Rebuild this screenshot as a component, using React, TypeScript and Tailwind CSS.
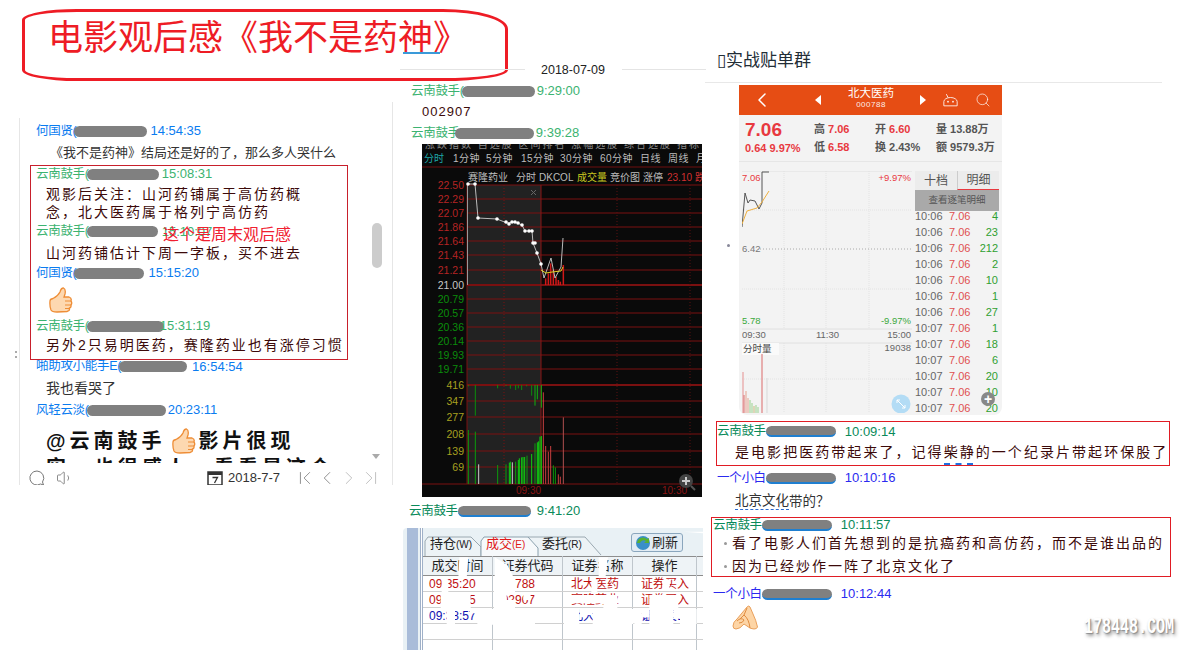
import React from 'react';
import { ChevronFirst, ChevronLast, ChevronLeft, ChevronRight, ChevronLeft as Back, Search, Volume1 } from 'lucide-react';

const sans = 'font-["Liberation_Sans","Noto_Sans_CJK_SC",sans-serif]';

const ThumbUp: React.FC<{ className?: string }> = ({ className }) => (
  <svg viewBox="0 0 26 26" className={className}>
    <path d="M3 14 Q3 12 6 11.500 Q11 9 13 5 Q14 1 16.500 1 Q19 2 18 7 L17 10 L22 10 Q25 11 24 14 Q25.500 16 24 18 Q24.500 20.500 22.500 21 Q23 24 20 24.500 L10 25 Q5 25 4 23 Q2.500 19 3 14Z" fill="#fdd8b0" stroke="#ee8d36" strokeWidth="1.300" />
    <path d="M18 14h6M18 18h6M18 21.500h4.500" stroke="#ee8d36" strokeWidth="1" fill="none" />
  </svg>
);

const PrayHands: React.FC<{ className?: string }> = ({ className }) => (
  <svg viewBox="0 0 26 25" className={className}>
    <path d="M1 21 Q1 17 5 14 L15 2 Q17 0 18 2 L21 9 Q24 15 25.500 22 Q25 24 22 24 Q18 24 15 21 L12 19 Q8 24 4 24 Q1 24 1 21Z" fill="#fdd5a6" stroke="#e9a05c" strokeWidth="1" />
    <path d="M15 3 L12 10 Q17 14 18 23M5 16 Q9 12 12 15 Q11 18 7 18M12 10 L8 14" stroke="#e08c40" strokeWidth="1" fill="none" />
  </svg>
);

// name line of one chat message, the grey pill is the blanked out QQ number
const Head: React.FC<{ name: string; pill: number; time: string; color: string; gap?: number; h: string; underline?: boolean; left?: number; pull?: number }> = ({ name, pill, time, color, gap = 3, h, underline, left = 0, pull = 0 }) => (
  <div className={`flex items-center whitespace-nowrap ${h} ${color}`} style={{ paddingLeft: left }}>
    <span className="text-[12.500px] tracking-[-0.300px]">{name}</span>
    <span className={`h-[11px] rounded-full bg-[#808080] ${underline ? 'border-b-2 border-[#1f7fd0]' : ''}`} style={{ width: pill, marginLeft: -pull }} />
    <span className="text-[13px]" style={{ marginLeft: gap }}>{time}</span>
  </div>
);

const Msg: React.FC<{ h: string; children: React.ReactNode; left?: string }> = ({ h, children, left = 'pl-[10px]' }) => (
  <div className={`flex items-center whitespace-nowrap text-[14px] tracking-[2px] text-[#3c0a0a] ${h} ${left}`}>{children}</div>
);

const LeftChat: React.FC = () => (
  <div className={`absolute left-[19px] top-[118px] h-[367px] w-[374px] overflow-hidden border-x border-[#e6e6e6] ${sans}`}>
    <div className="h-[345px] overflow-hidden pl-[16px]">
      <div className="h-[3px]" />
      <Head name="何国贤(" pill={73} pull={2} time="14:54:35" color="text-[#0a7cf0]" gap={3} h="h-[20px]" />
      <div className="flex h-[23px] items-center whitespace-nowrap pl-[14px] text-[13px] text-[#333]">《我不是药神》结局还是好的了，那么多人哭什么</div>
      <Head name="云南鼓手(" pill={72} pull={2} time="15:08:31" color="text-[#3cb371]" gap={3} h="h-[20px]" />
      <Msg h="h-[21px]">观影后关注：山河药铺属于高仿药概</Msg>
      <Msg h="h-[15px]">念，北大医药属于格列宁高仿药</Msg>
      <Head name="云南鼓手(" pill={71} pull={2} time="15:10:07" color="text-[#3cb371]" gap={4} h="h-[23px]" />
      <Msg h="h-[20px]">山河药铺估计下周一字板，买不进去</Msg>
      <Head name="何国贤(" pill={70} pull={2} time="15:15:20" color="text-[#0a7cf0]" gap={4} h="h-[20px]" />
      <div className="flex h-[33px] items-center pl-[11px]"><ThumbUp className="h-[26px] w-[26px]" /></div>
      <Head name="云南鼓手(" pill={77} pull={2} time="15:31:19" color="text-[#3cb371]" gap={-4} h="h-[20px]" />
      <Msg h="h-[19px]">另外2只易明医药，赛隆药业也有涨停习惯</Msg>
      <Head name="啪助攻小能手E(" pill={68} pull={2} time="16:54:54" color="text-[#0a7cf0]" gap={5} h="h-[23px]" />
      <div className="flex h-[21px] items-center whitespace-nowrap pl-[10px] text-[14px] text-[#333]">我也看哭了</div>
      <Head name="风轻云淡(" pill={79} pull={2} time="20:23:11" color="text-[#0a7cf0]" gap={2} h="h-[22px]" />
      <div className="flex h-[37px] items-center whitespace-nowrap pl-[10px] pt-[3px] text-[20px] font-bold tracking-[4px] text-[#111]">
        @云南鼓手<ThumbUp className="ml-[4px] mr-[3px] h-[26px] w-[26px]" />影片很现
      </div>
      <div className="whitespace-nowrap pl-[10px] text-[20px] font-bold leading-[20px] tracking-[4px] text-[#111]">实，也很感人，看看是这个</div>
    </div>
    <div className="absolute left-[352px] top-[105px] h-[45px] w-[10px] rounded-full bg-[#cccccc]" />
    <div className="absolute left-[352px] top-[336px] h-0 w-0 border-x-[4px] border-t-[5px] border-x-transparent border-t-[#aaa]" />
    <div className="flex h-[22px] items-center pl-[8px] pt-[8px] text-[#666]">
      <svg viewBox="0 0 18 18" className="h-[18px] w-[18px] shrink-0"><path d="M9 2a7 7 0 1 0 3.500 13l3 1-1-3A7 7 0 0 0 9 2Z" fill="none" stroke="#777" strokeWidth="1" /></svg>
      <Volume1 size={18} strokeWidth={1} className="ml-[10px] shrink-0" />
      <svg viewBox="0 0 16 16" className="ml-[133px] h-[16px] w-[16px] shrink-0"><rect x="1" y="2" width="14" height="13" fill="none" stroke="#333" strokeWidth="1.500" /><rect x="1" y="2" width="14" height="3" fill="#333" /><path d="M5.500 7.500h5L7.500 13" fill="none" stroke="#333" strokeWidth="1.300" /></svg>
      <span className="ml-[5px] whitespace-nowrap text-[13px] text-[#333]">2018-7-7</span>
      <div className="ml-[14px] flex shrink-0 items-center text-[#888]">
        <ChevronFirst size={22} strokeWidth={1} />
        <ChevronLeft size={22} strokeWidth={1} />
        <ChevronRight size={22} strokeWidth={1} className="text-[#bbb]" />
        <ChevronLast size={22} strokeWidth={1} className="text-[#bbb]" />
      </div>
    </div>
  </div>
);

const prices: [string, number, string][] = [
  ['22.50', 185, '#b52424'], ['22.29', 199, '#b52424'], ['22.07', 213, '#b52424'], ['21.86', 227, '#b52424'], ['21.64', 241, '#b52424'], ['21.43', 255, '#b52424'], ['21.21', 270, '#b52424'], ['21.00', 285, '#c8c8c8'],
  ['20.79', 299, '#0a8c0a'], ['20.57', 313, '#0a8c0a'], ['20.36', 327, '#0a8c0a'], ['20.14', 341, '#0a8c0a'], ['19.93', 355, '#0a8c0a'], ['19.71', 369, '#0a8c0a'],
];
const vols: [string, number][] = [['416', 385], ['347', 401], ['277', 417], ['208', 434], ['139', 451], ['69', 467]];
const tabs: [string, number][] = [['1分钟', 453], ['5分钟', 486], ['15分钟', 521], ['30分钟', 560], ['60分钟', 600], ['日线', 640], ['周线', 668], ['月', 696]];

// bars measured off the reference, x and top of bar
const hang = [[205, 319], [226, 407], [293, 325], [318, 318], [331, 326], [347, 330], [355, 325], [365, 330], [380, 319], [395, 347], [405, 377], [412, 358], [424, 383]];
const volBars: [number, number, string][] = [[205, 450, '#0c9c0c'], [226, 455, '#0c9c0c'], [236, 553, '#ccc'], [293, 555, '#0c9c0c'], [318, 553, '#0c9c0c'], [328, 548, '#0fd00f'], [331, 545, '#0fd00f'], [337, 547, '#ccc'], [347, 545, '#0c9c0c'], [355, 540, '#0fd00f'], [358, 535, '#0fd00f'], [365, 532, '#0fd00f'], [369, 531, '#0fd00f'], [374, 531, '#0fd00f'], [381, 527, '#0c9c0c'], [395, 522, '#0fd00f'], [405, 490, '#0c9c0c'], [412, 487, '#0fd00f'], [416, 484, '#0fd00f'], [420, 470, '#0fd00f'], [424, 468, '#0fd00f'], [430, 337, '#c84040'], [437, 498, '#c84040'], [445, 515, '#c84040'], [452, 498, '#c84040'], [460, 556, '#0c9c0c'], [466, 562, '#0c9c0c'], [475, 583, '#c84040'], [481, 590, '#c84040'], [490, 412, '#b05050']];
const miniBars = [[437, 655], [445, 640], [452, 610], [460, 630], [468, 650], [475, 660], [481, 665], [490, 615]];
const line = '468,184 475,184 478,218 497,219 507,223 515,222 522,225 525,231 532,231 533,243 537,253 541,264 544,278 551,258 555,278 561,267 563,238';
const dots = [[468, 184], [475, 184], [478, 218], [497, 219], [506, 222], [509, 224], [512, 222], [515, 222], [518, 223], [522, 225], [525, 231], [529, 231], [532, 231], [533, 243], [535, 243], [537, 253], [541, 264]];

const KChart: React.FC = () => (
  <svg viewBox="422 144 280 353" className="absolute left-[422px] top-[144px] h-[353px] w-[280px]" fontFamily="Liberation Sans, Noto Sans CJK SC, sans-serif" fontSize="10">
    <rect x="422" y="144" width="280" height="353" fill="#0a0a0a" />
    <text x="425" y="148" fill="#888" letterSpacing="2">涨跌指数 自选股 区间排名 涨幅选股 综合选股 指标</text>
    <text x="424" y="162" fill="#1ea8a8">分时</text>
    {tabs.map(([t, x]) => <text key={t} x={x} y="162" fill="#bdbdbd" letterSpacing="0.500">{t}</text>)}
    <line x1="422" x2="702" y1="167" y2="167" stroke="#6e0f0f" />
    <g fill="#bdbdbd">
      <text x="468" y="181">赛隆药业</text>
      <text x="516" y="181">分时</text>
      <text x="539" y="181">DKCOL</text>
      <text x="577" y="181" fill="#c8c820">成交量</text>
      <text x="610" y="181">竞价图</text>
      <text x="643" y="181">涨停</text>
      <text x="667" y="181" fill="#d03030">23.10</text>
      <text x="695" y="181" fill="#d03030">跌</text>
    </g>
    <rect x="467" y="185" width="74" height="299" fill="#222" />
    {prices.map(([t, y, c]) => (
      <g key={t}>
        <line x1="467" x2="702" y1={y} y2={y} stroke="#7a1010" strokeWidth={t === '21.00' ? 2 : 1} />
        <text x="464" y={y + 4} textAnchor="end" fill={c} fontSize="10.500">{t}</text>
      </g>
    ))}
    {vols.map(([t, y]) => (
      <g key={t}>
        <line x1="467" x2="702" y1={y} y2={y} stroke="#7a1010" strokeWidth={t === '416' ? 2 : 1} />
        <text x="464" y={y + 4} textAnchor="end" fill="#a8a020" fontSize="10.500">{t}</text>
      </g>
    ))}
    <line x1="422" x2="702" y1="484" y2="484" stroke="#7a1010" />
    <line x1="467" x2="467" y1="185" y2="484" stroke="#7a1010" />
    <line x1="504" x2="504" y1="185" y2="484" stroke="#7a1010" strokeDasharray="1 2" />
    <line x1="541" x2="541" y1="185" y2="484" stroke="#8a1414" />
    <line x1="617" x2="617" y1="185" y2="484" stroke="#5a1010" strokeDasharray="1 2" />
    <line x1="690" x2="690" y1="185" y2="484" stroke="#5a1010" strokeDasharray="1 2" />
    <path d="M531 190l5 5m0-5l-5 5" stroke="#666" />
    <line x1="467.500" x2="467.500" y1="184" y2="285" stroke="#999" />
    {hang.map(([x, y]) => <line key={x} x1={x / 3 + 400} x2={x / 3 + 400} y1="385" y2={y / 3 + 280} stroke={x > 400 ? '#0fb00f' : '#0c8c0c'} />)}
    {volBars.map(([x, y, c]) => <line key={x} x1={x / 3 + 400} x2={x / 3 + 400} y1="484" y2={y / 3 + 280} stroke={c} />)}
    {miniBars.map(([x, y]) => <line key={x} x1={x / 3 + 400} x2={x / 3 + 400} y1="285" y2={y / 3 + 60} stroke="#d01818" strokeWidth="1.500" />)}
    <polyline points={line} fill="none" stroke="#bbb" />
    <polyline points="541,270 546,273 552,272 561,271 563,267" fill="none" stroke="#e0d020" />
    {dots.map(([x, y], i) => <circle key={i} cx={x} cy={y} r="1.800" fill="#fff" />)}
    <text x="516" y="494" fill="#8a1414">09:30</text>
    <text x="662" y="494" fill="#8a1414">10:30</text>
    <circle cx="686" cy="481" r="7" fill="#444" />
    <path d="M686 477v8m-4-4h8" stroke="#ccc" strokeWidth="2" />
    <path d="M691 486l4 4" stroke="#555" strokeWidth="2" />
  </svg>
);

const orderRows = [
  { t: '09:35:20', code: '000788', name: '北大医药', op: '证券买入', c: 'text-[#c01010]' },
  { t: '09:36:15', code: '002907', name: '赛隆药业', op: '证券买入', c: 'text-[#c01010]' },
  { t: '09:38:57', code: '', name: '北大医药', op: '证券卖出', c: 'text-[#1010b0]' },
];
const headCls = 'w-[70px] shrink-0 border-r border-[#bfc6cc] text-center';
const cellCls = 'w-[70px] shrink-0 border-r border-[#bfc6cc] h-full';

const OrderTable: React.FC = () => (
  <div className={`absolute left-[403px] top-[528px] flex h-[122px] w-[300px] overflow-hidden rounded-tl-[4px] bg-[#e9f1f5] pl-[4px] ${sans}`}>
    <div className="w-[11px] bg-[#a9bcd9]" />
    <div className="ml-[2px] w-[3px] border-x border-[#9fb0c8] bg-white" />
    <div className="relative w-[280px] bg-white">
      <div className="relative flex h-[28px] items-end bg-[#e9f1f5] pb-[1px] pl-[6px] text-[13px] text-[#222]">
        <svg viewBox="423 528 280 28" className="absolute left-0 top-0 h-[28px] w-[280px]">
          <path d="M425 556V541L428 537H471L481 547V556" fill="#edf3f6" stroke="#9aa8b0" />
          <path d="M537 556L528 537H585L601 555" fill="#edf3f6" stroke="#9aa8b0" />
          <path d="M481 556V541L484 537H528L538 548V556" fill="#f6f9fb" stroke="#8aa0ad" />
        </svg>
        <div className="relative w-[56px] pb-[2px] pl-[1px]">持仓<span className="text-[10px]">(W)</span></div>
        <div className="relative w-[56px] pb-[2px] pl-[1px] text-[#e01818]">成交<span className="text-[10px]">(E)</span></div>
        <div className="relative w-[56px] pb-[2px] pl-[1px]">委托<span className="text-[10px]">(R)</span></div>
        <div className="absolute left-[208px] top-[5px] flex h-[19px] w-[52px] items-center gap-[1px] rounded-[3px] border border-[#8aa6bd] bg-[#e2ecf4] pl-[3px] text-[13px]">
          <svg viewBox="0 0 16 16" className="h-[16px] w-[16px]"><circle cx="8" cy="8" r="7" fill="#3a8fc8" /><path d="M2 8a6 6 0 0 1 10-4l2-1v5H9l2-2a4 4 0 0 0-6 2Z" fill="#58b030" /></svg>
          刷新
        </div>
      </div>
      <div className="flex h-[20px] items-center border-y border-[#8d8d8d] bg-[#eef3f6] text-[13px] text-[#222]">
        {['成交时间', '证券代码', '证券名称'].map((h) => <div key={h} className={headCls}>{h}</div>)}
        <div className="w-[64px] border-r border-[#bfc6cc] text-center">操作</div>
      </div>
      {orderRows.map((r) => (
        <div key={r.t} className={`flex h-[16px] items-center border-b border-[#d0d0d0] text-[12px] leading-[16px] ${r.c}`}>
          <div className={`${cellCls} pl-[6px]`}>{r.t}</div>
          <div className={`${cellCls} pl-[2px]`}>{r.code}</div>
          <div className={`${cellCls} pl-[8px]`}>{r.name}</div>
          <div className="h-full w-[64px] border-r border-[#bfc6cc] pl-[8px]">{r.op}</div>
        </div>
      ))}
      {[0, 1].map((i) => <div key={i} className="flex h-[16px] border-b border-[#d0d0d0]">{[0, 1, 2].map((j) => <div key={j} className={cellCls} />)}<div className="h-full w-[64px] border-r border-[#bfc6cc]" /></div>)}
    </div>
    {/* white scribbles laid over the table by whoever posted it */}
    <svg viewBox="0 0 930 450" className="absolute -left-[3px] -top-[28px] h-[150px] w-[310px]">
      <path d="M178 172H205L200 235H175Z" fill="#fff" />
      <path d="M125 238H145V282H125Z M122 285H212V325H122Z M140 327H165V372H140Z M210 327H268V372H232V340H210Z" fill="#fff" />
      <path d="M284 172 322 195 345 240V285H320V300H345V325H405V374H238V327H282V240H284Z" fill="#fff" />
      <path d="M370 285H392V300H370Z" fill="#fff" />
      <path d="M596 172H624L616 235H596Z" fill="#fff" />
      <path d="M574 238H592V282H574Z" fill="#fff" />
      <path d="M492 285H610V310H492Z M610 285H652V325H610Z M492 327H538V372H492Z M578 327H700V372H578Z" fill="#fff" />
      <path d="M540 327H578V345H540Z" fill="#fff" />
      <path d="M785 240H812L806 272H790Z" fill="#fff" />
      <path d="M748 285H835V325H748Z M703 327H725V372H703Z M748 327H820V372H748Z M840 327H890V372H840Z" fill="#fff" />
      <path d="M725 327H748V352H725Z M820 327H840V356H820Z" fill="#fff" />
      <path d="M850 95H930V450H912V100Z" fill="#fff" />
    </svg>
  </div>
);

const ticks = [
  ['10:06', '4'], ['10:06', '23'], ['10:06', '212'], ['10:06', '2'], ['10:06', '10'], ['10:06', '1'], ['10:06', '27'],
  ['10:07', '1'], ['10:07', '18'], ['10:07', '6'], ['10:07', '20'], ['10:07', '10'], ['10:07', '20'],
];

const Phone: React.FC = () => (
  <div className={`absolute left-[739px] top-[85px] h-[330px] w-[263px] overflow-hidden rounded-b-[8px] bg-[#f3f3f3] ${sans}`}>
    <div className="relative flex h-[30px] items-center bg-[#e64d14] text-white">
      <Back size={24} strokeWidth={1.500} className="ml-[11px]" />
      <div className="ml-[41px] h-0 w-0 border-y-[5px] border-r-[6px] border-y-transparent border-r-white" />
      <div className="-mt-[5px] ml-[27px] w-[46px] whitespace-nowrap text-center">
        <div className="text-[11.500px] leading-[14px]">北大医药</div>
        <div className="text-[8px] leading-[10px] tracking-[0.500px] opacity-90">000788</div>
      </div>
      <div className="ml-[26px] h-0 w-0 border-y-[5px] border-l-[6px] border-y-transparent border-l-white" />
      <svg viewBox="0 0 18 16" className="ml-[17px] h-[16px] w-[15px] shrink-0"><path d="M1 10a8 5 0 0 1 16 0v5H1ZM6 5 4 1" fill="none" stroke="#fff" strokeWidth="1" /><circle cx="6" cy="10" r="1" fill="#fff" /><circle cx="12" cy="10" r="1" fill="#fff" /></svg>
      <Search size={16} strokeWidth={1} className="ml-[17px] shrink-0" />
    </div>
    <div className="flex h-[47px] items-center border-b border-[#e6e6e6] pl-[6px] text-[11px] font-bold leading-[18px] text-[#555]">
      <div className="w-[69px] text-[#e8393f]">
        <div className="text-[19px] leading-[20px]">7.06</div>
        <div className="text-[11px] leading-[16px]">0.64 9.97%</div>
      </div>
      <div className="w-[61px]"><div>高 <span className="text-[#e8393f]">7.06</span></div><div>低 <span className="text-[#e8393f]">6.58</span></div></div>
      <div className="w-[61px]"><div>开 <span className="text-[#e8393f]">6.60</span></div><div>换 2.43%</div></div>
      <div><div>量 13.88万</div><div>额 9579.3万</div></div>
    </div>
    <div className="relative mt-[9px] flex pl-[3px]">
      <svg viewBox="742 173 170 242" className="h-[242px] w-[170px] shrink-0 bg-[#f3f3f3]" fontSize="9.500" fontFamily="Liberation Sans, Noto Sans CJK SC, sans-serif">
        <g stroke="#e3e3e3" strokeDasharray="1 1">
          <path d="M784 173V331M826 173V331M869 173V331M742 212H912M742 291H912M784 345V415M826 345V415M869 345V415M742 381H912" fill="none" />
        </g>
        <path d="M742 173H912M742 331H912M742 345H912" stroke="#e0e0e0" />
        <line x1="760" x2="912" y1="251" y2="251" stroke="#aaa" strokeDasharray="1 2" />
        <polyline points="742,229 745,195 748,205 750,202 755,203 759,211 762,205 762,174 769,174" fill="none" stroke="#555" />
        <polyline points="742,226 747,213 757,210 762,204 769,193" fill="none" stroke="#eeb040" />
        <text x="742" y="183" fill="#e8393f">7.06</text>
        <text x="911" y="183" fill="#e8393f" textAnchor="end">+9.97%</text>
        <text x="742" y="254" fill="#777">6.42</text>
        <text x="742" y="326" fill="#3aa83a">5.78</text>
        <text x="911" y="326" fill="#3aa83a" textAnchor="end">-9.97%</text>
        <text x="742" y="340" fill="#666">09:30</text>
        <text x="816" y="340" fill="#666">11:30</text>
        <text x="911" y="340" fill="#666" textAnchor="end">15:00</text>
        <rect x="742" y="345" width="37" height="12" fill="#fafafa" />
        <text x="743" y="354" fill="#444">分时量</text>
        <text x="911" y="353" fill="#666" textAnchor="end">19038</text>
        {[[743, 374, '#e8a0a0'], [744, 397, '#e08080'], [746, 393, '#e8b0a0'], [748, 400, '#e8b0a0'], [750, 402, '#a8d8a0'], [752, 405, '#a8d8a0'], [754, 408, '#d0c090'], [756, 407, '#a8d8a0'], [758, 409, '#a8d8a0'], [762, 356, '#e08080'], [767, 380, '#ddd']].map(([x, y, c]) => (
          <line key={x as number} x1={x} x2={x} y1="415" y2={y} stroke={c as string} strokeWidth="1.200" />
        ))}
        <circle cx="901" cy="406" r="9.500" fill="#b3dcf5" />
        <path d="M897 402l8 8m-8-8v3m0-3h3m5 8v-3m0 3h-3" stroke="#fff" fill="none" />
      </svg>
      <div className="relative ml-[3px] w-[84px] text-[11px]">
        <div className="flex h-[19px] items-center bg-[#ececec] text-[12px] text-[#555]">
          <div className="w-[42px] text-center">十档</div>
          <div className="h-[19px] w-[42px] border-b border-l border-b-[#e8393f] border-l-[#ccc] text-center leading-[19px]">明细</div>
        </div>
        <div className="relative z-10 flex h-[21px] items-center justify-center bg-[#a9a9a9] text-[9.500px] text-[#555]">查看逐笔明细</div>
        <div className="-mt-[3px]">
          {ticks.map(([t, n], i) => (
            <div key={i} className="flex h-[16px] items-center leading-none text-[#666]">
              <span className="w-[34px]">{t}</span>
              <span className="text-[#e05050]">7.06</span>
              <span className="flex-1 pr-[1px] text-right text-[#30a030]">{n}</span>
            </div>
          ))}
        </div>
        <div className="absolute left-[66px] top-[221px] flex h-[14px] w-[14px] items-center justify-center rounded-full bg-[#888] text-[14px] font-bold leading-none text-white">+</div>
      </div>
    </div>
  </div>
);

const RightChat: React.FC = () => (
  <div className={`absolute left-[711px] top-[421px] w-[460px] ${sans}`}>
    <div className="ml-[5px] h-[45px] w-[454px] border border-[#e01c24]">
      <Head name="云南鼓手" pill={70} time="10:09:14" color="text-[#0a8a5a]" gap={9} h="h-[19px]" underline />
      <Msg h="h-[23px]" left="pl-[18px]">
        <span className="tracking-[2.050px]">是电影把医药带起来了，记得<span className="relative">柴静<span className="absolute left-0 right-[3px] top-[19px] border-b-2 border-dashed border-[#1f6fe0]" /></span>的一个纪录片带起环保股了</span>
      </Msg>
    </div>
    <div className="ml-[6px] mt-[1px]">
      <Head name="一个小白" pill={70} time="10:10:16" color="text-[#2a2af0]" gap={9} h="h-[22px]" underline />
      <div className="flex h-[27px] items-center pl-[18px] pb-[2px]"><span className="border-b border-dashed border-[#2a6ad0] text-[13.500px] leading-[16px] text-[#333]">北京文化</span><span className="text-[13.500px] leading-[16px] text-[#333]">带的？</span></div>
    </div>
    <div className="mt-[1px] h-[60px] w-[460px] border border-[#e01c24]">
      <Head name="云南鼓手" pill={70} time="10:11:57" color="text-[#0a8a5a]" gap={9} h="h-[14px]" left={1} underline />
      <Msg h="h-[23px]" left="pl-[12px]"><span className="mr-[5px] h-[3px] w-[3px] rounded-full bg-[#999]" />看了电影人们首先想到的是抗癌药和高仿药，而不是谁出品的</Msg>
      <Msg h="h-[23px]" left="pl-[12px]"><span className="mr-[5px] h-[3px] w-[3px] rounded-full bg-[#999]" />因为已经炒作一阵了北京文化了</Msg>
    </div>
    <div className="mt-[6px] pl-[2px]">
      <Head name="一个小白" pill={70} time="10:12:44" color="text-[#2a2af0]" gap={9} h="h-[22px]" underline />
      <div className="pl-[19px]"><PrayHands className="h-[25px] w-[26px]" /></div>
    </div>
  </div>
);

export default function App() {
  return (
    <div className={`relative h-[650px] w-[1196px] overflow-hidden bg-white ${sans}`}>
      <div className="absolute left-[22px] top-[9px] flex h-[72px] w-[486px] items-start rounded-[55px_65px_65px_55px/11px_20px_11px_11px] border-[3px] border-[#ee1c25] pl-[23px]">
        <span className="relative whitespace-nowrap text-[35px] leading-[52px] text-[#ee1c25]">
          电影观后感《我不是药神》
          <span className="absolute left-[355px] top-[40px] h-[2px] w-[37px] bg-[#3a9ad9]" />
        </span>
      </div>

      <LeftChat />
      {/* thin red frame drawn over the left chat, with the note typed on it */}
      <div className="absolute left-[30px] top-[165px] h-[195px] w-[318px] border border-[#c8202c]" />
      <div className="absolute left-[163px] top-[226px] whitespace-nowrap text-[16px] leading-[18px] text-[#f02030]">这个是周末观后感</div>
      <div className="absolute left-[392px] top-[102px] h-[16px] w-px bg-[#e6e6e6]" />
      <div className="absolute left-[15px] top-[351px] h-[7px] w-[2px] border-y-2 border-[#aaa]" />

      <div className="absolute left-[400px] top-[69px] h-px w-[125px] bg-[#e4e4e4]" />
      <div className="absolute left-[541px] top-[62px] text-[12.500px] leading-[16px] text-[#222]">2018-07-09</div>
      <div className="absolute left-[622px] top-[69px] h-px w-[84px] bg-[#e4e4e4]" />

      <div className="absolute left-[411px] top-[81px] w-[290px]">
        <Head name="云南鼓手(" pill={73} pull={2} time="9:29:00" color="text-[#3cb371]" gap={2} h="h-[20px]" />
        <div className="flex h-[22px] items-center pl-[11px] text-[13px] tracking-[1px] text-[#3c0a0a]">002907</div>
        <Head name="云南鼓手" pill={79} pull={5} time="9:39:28" color="text-[#3cb371]" gap={2} h="h-[20px]" />
      </div>
      <KChart />
      <div className="absolute left-[409px] top-[501px]">
        <Head name="云南鼓手" pill={73} time="9:41:20" color="text-[#0a8a5a]" gap={6} h="h-[20px]" underline />
      </div>
      <OrderTable />

      <div className="absolute left-[717px] top-[50px] whitespace-nowrap text-[17px] leading-[22px] text-[#222d36]">▯实战贴单群</div>
      <div className="absolute left-[705px] top-[82px] h-px w-[457px] bg-[#e8e8e8]" />
      <div className="absolute left-[727px] top-[244px] h-[3px] w-[3px] rounded-full bg-[#889]" />
      <Phone />
      <RightChat />

      <div className="absolute left-[1084px] top-[616px] origin-top-left scale-y-[1.500] whitespace-nowrap font-['Liberation_Mono',monospace] text-[15px] font-bold leading-[16px] text-white [text-shadow:1px_1px_1px_#888,2px_2px_3px_#999]">178448.COM</div>
    </div>
  );
}
